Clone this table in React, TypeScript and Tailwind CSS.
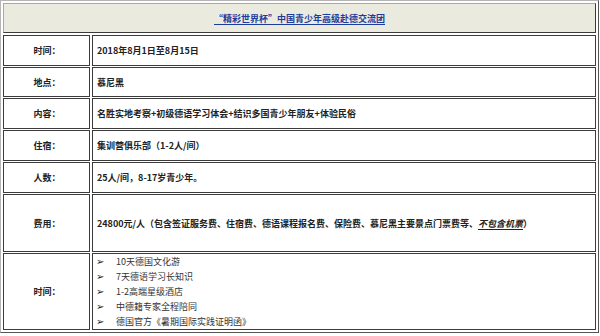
const font = { fontFamily: '"Noto Sans CJK SC", "Noto Sans", sans-serif' };

const rows = [
  { label: "时间：", h: "h-[31px]", text: "2018年8月1日至8月15日" },
  { label: "地点：", h: "h-[30px]", text: "慕尼黑" },
  { label: "内容：", h: "h-[31px]", text: "名胜实地考察+初级德语学习体会+结识多国青少年朋友+体验民俗" },
  { label: "住宿：", h: "h-[31px]", text: "集训营俱乐部（1-2人/间）" },
  { label: "人数：", h: "h-[31px]", text: "25人/间，8-17岁青少年。" },
];

const perks = [
  "10天德国文化游",
  "7天德语学习长知识",
  "1-2高端星级酒店",
  "中德籍专家全程陪同",
  "德国官方《暑期国际实践证明函》",
];

const cell = "border border-[#3c3c3c] bg-white flex items-center";

export default function App() {
  return (
    <div className="w-[600px] h-[336px] bg-white" style={font}>
      <div className="w-[599px] border border-t-[#b5b5b5] border-l-[#b5b5b5] border-r-[#555] border-b-[#555] p-[2px] grid grid-cols-[87px_1fr] gap-x-[2px] gap-y-px text-[9px] leading-[15px] text-[#222]">
        {/* title */}
        <div className="col-span-2 h-[30px] mb-px border border-t-[#a8a8a8] border-l-[#a8a8a8] border-r-[#3c3c3c] border-b-[#3c3c3c] bg-[#ebeadf] flex items-center justify-center">
          <span className="font-bold text-[#1d3c9c] underline underline-offset-2">
            “精彩世界杯”中国青少年高级赴德交流团
          </span>
        </div>

        {rows.map((r, i) => (
          <div key={i} className="contents">
            <div className={`${cell} ${r.h} justify-center font-bold pl-px`}>{r.label}</div>
            <div className={`${cell} ${r.h} pl-1 font-bold`}>{r.text}</div>
          </div>
        ))}

        <div className={`${cell} h-[58px] justify-center font-bold pl-px`}>费用：</div>
        <div className={`${cell} h-[58px] pl-1 font-bold`}>
          <span>
            24800元/人（包含签证服务费、住宿费、德语课程报名费、保险费、慕尼黑主要景点门票费等、
            <span className="italic underline underline-offset-2">不包含机票</span>）
          </span>
        </div>

        <div className={`${cell} h-[77px] justify-center font-bold pl-px`}>时间：</div>
        <div className="border border-[#3c3c3c] bg-white h-[77px] pl-px flex flex-col justify-center">
          {perks.map((p, i) => (
            <div key={i} className="flex items-center h-[15px] text-[#333]">
              <span className="w-[22px] pl-[2px] text-[10px] font-bold text-[#222]" style={{ fontFamily: '"DejaVu Sans", sans-serif' }}>
                ➢
              </span>
              <span>{p}</span>
            </div>
          ))}
        </div>
      </div>
    </div>
  );
}
